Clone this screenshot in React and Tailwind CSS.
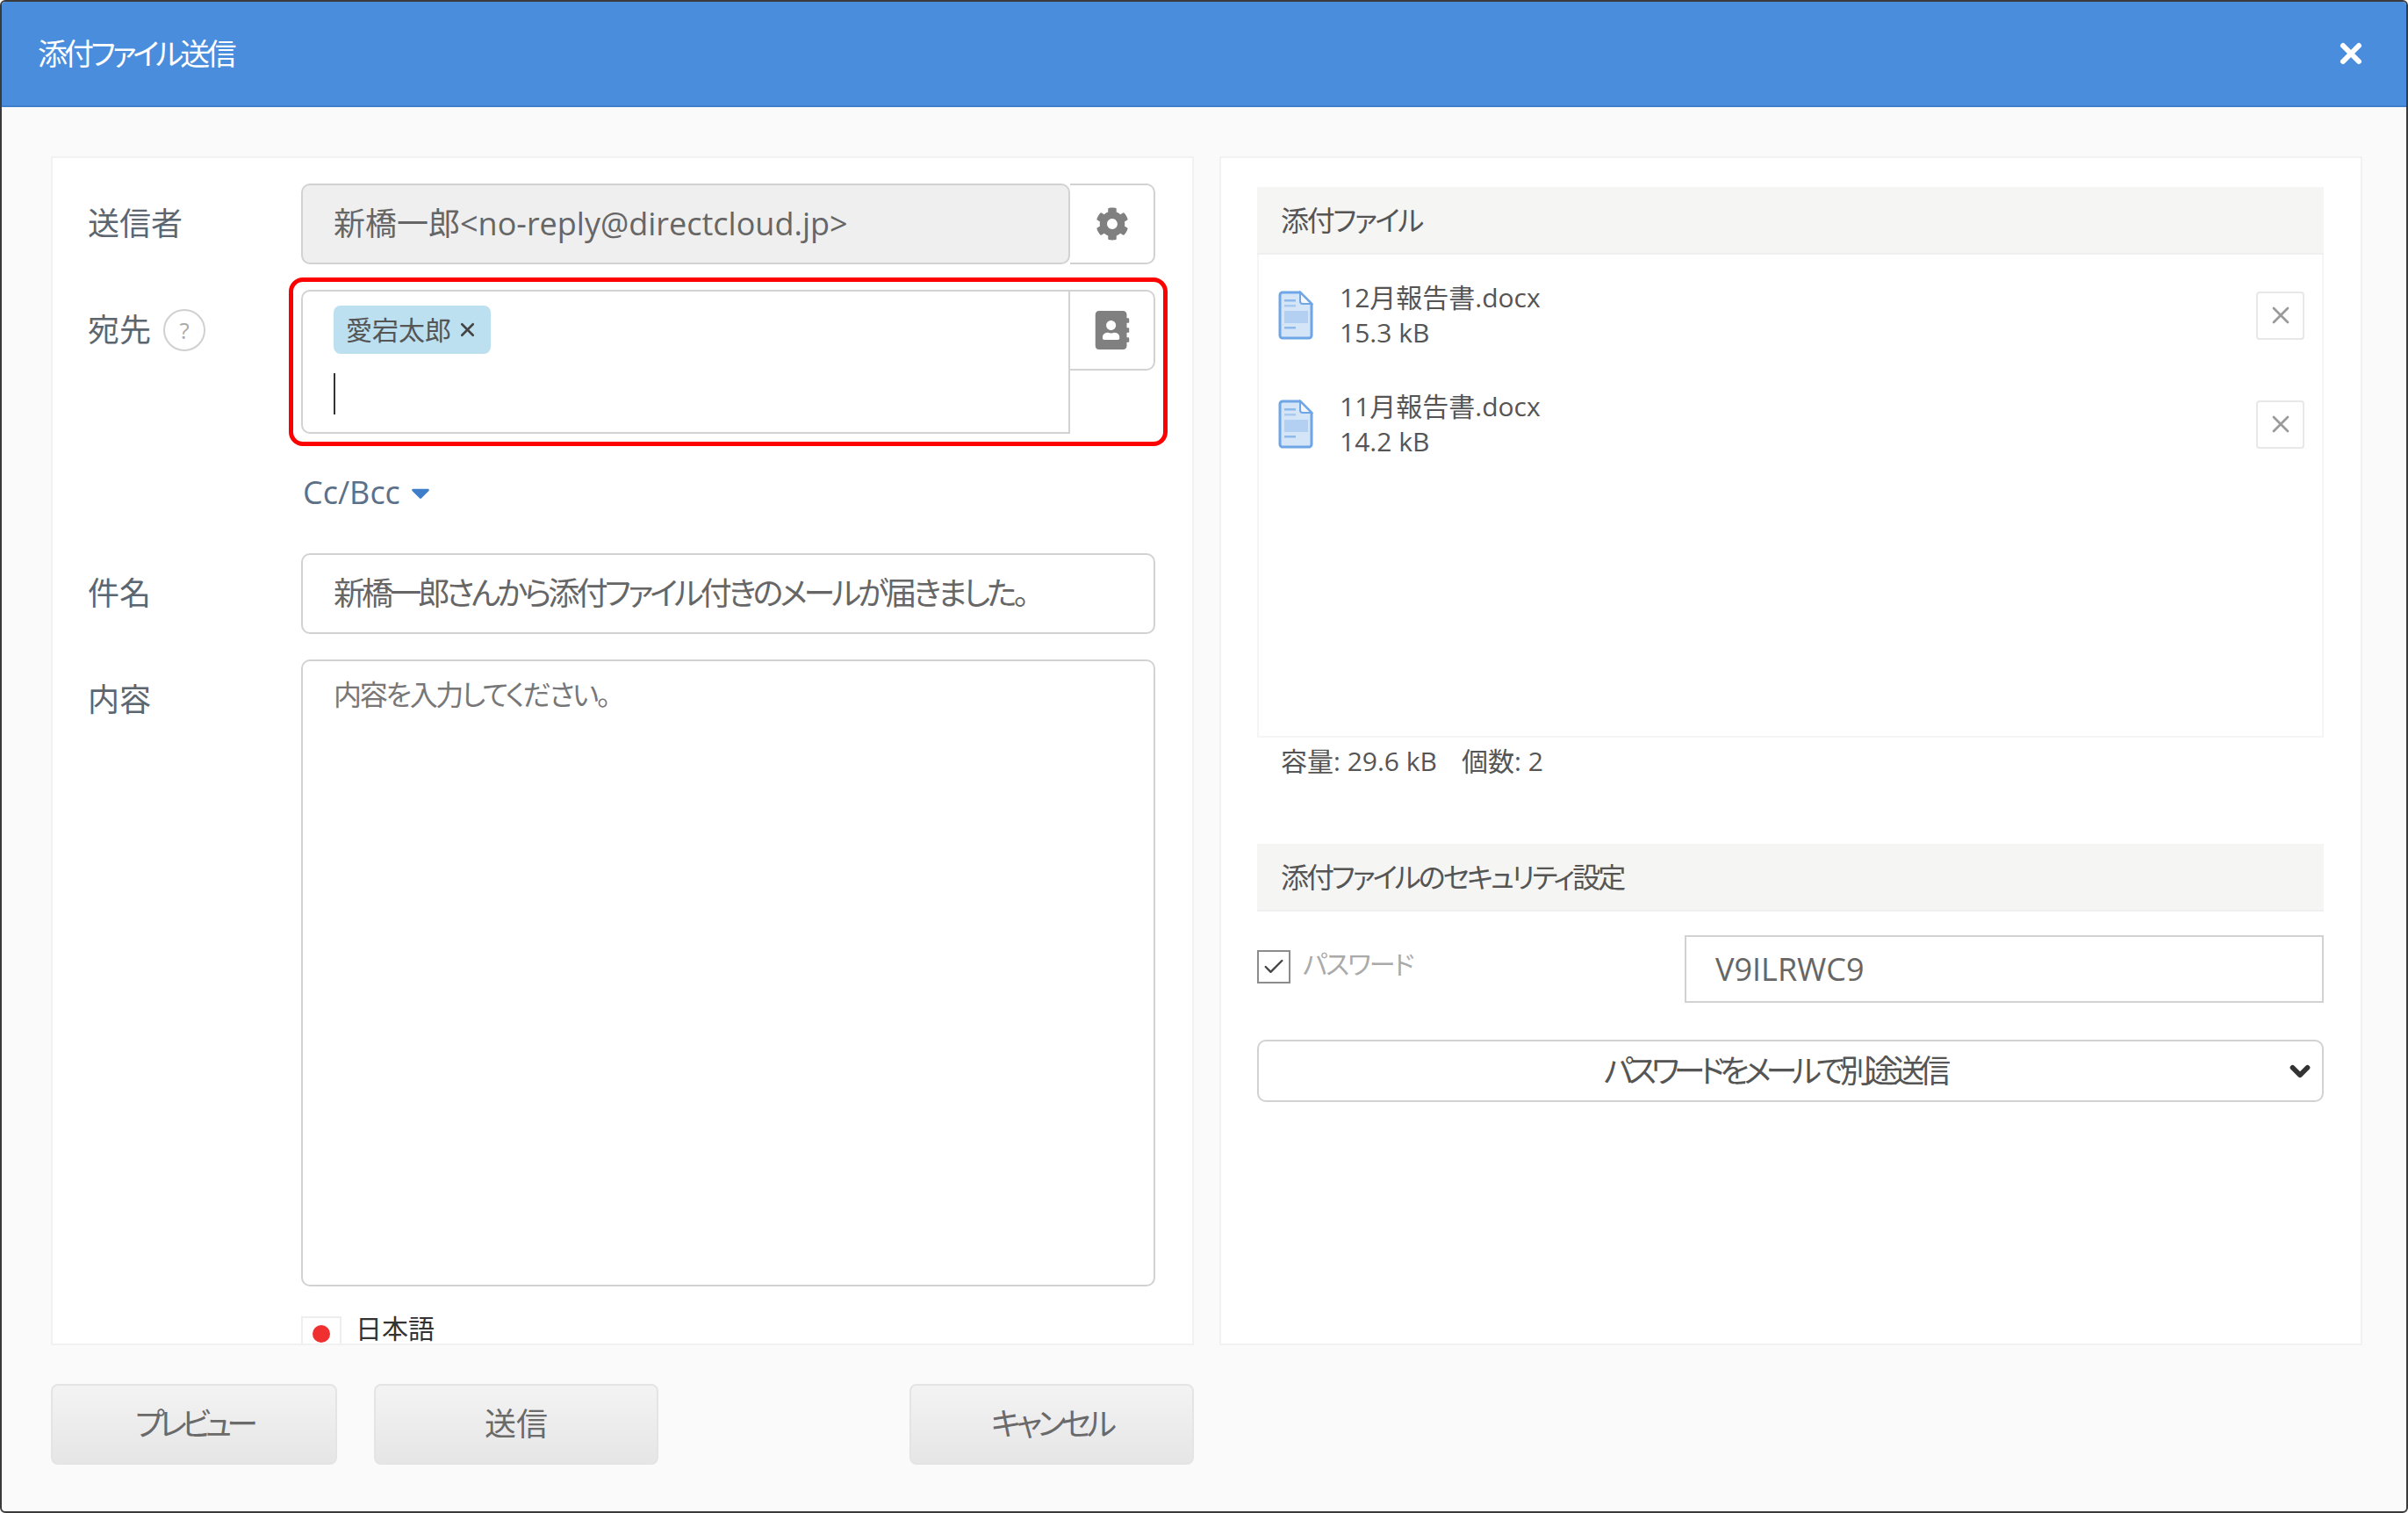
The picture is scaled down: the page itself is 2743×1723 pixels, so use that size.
// App.jsx
import { X, ChevronDown, Check } from 'lucide-react'
import { FaCog, FaAddressBook, FaCaretDown } from 'react-icons/fa'

const fieldBorder = 'border-2 border-[#d2d2d2]'

const files = [
  { name: '12月報告書.docx', size: '15.3 kB' },
  { name: '11月報告書.docx', size: '14.2 kB' },
]

function FileIcon() {
  return (
    <svg viewBox="0 0 40 56" className="w-[40px] h-[56px] shrink-0">
      <path d="M5 2h20l13 13v36a3 3 0 0 1-3 3H5a3 3 0 0 1-3-3V5a3 3 0 0 1 3-3z" fill="#d5e5f8" stroke="#6ea6e6" strokeWidth="3" />
      <path d="M25 2v10a3 3 0 0 0 3 3h10z" fill="#f4f8fd" stroke="#6ea6e6" strokeWidth="2" />
      <rect x="7" y="10" width="13" height="2.5" fill="#8db9ec" />
      <rect x="7" y="16" width="13" height="2.5" fill="#a9caf0" />
      <rect x="7" y="23" width="27" height="14" fill="#b3cff1" />
      <rect x="7" y="41" width="13" height="2.5" fill="#8db9ec" />
    </svg>
  )
}

function Field({ label, children }) {
  return (
    <div className="flex">
      <div className="w-[243px] shrink-0 text-[36px] leading-[92px] text-[#5c6670]">{label}</div>
      {children}
    </div>
  )
}

function SectionTitle({ className, children }) {
  return (
    <div className={`h-[77px] flex items-center px-[27px] bg-[#f5f5f3] border-b-2 border-[#efefef] text-[32px] text-[#555] ${className}`}>
      {children}
    </div>
  )
}

function FootButton({ className, children }) {
  return (
    <div className={`h-[92px] flex items-center justify-center rounded-[8px] border-2 border-[#e4e4e4] bg-gradient-to-b from-[#f3f3f3] to-[#e6e6e6] text-[36px] text-[#6a6a6a] ${className}`}>
      {children}
    </div>
  )
}

export default function App() {
  return (
    <div className="w-[2743px] h-[1723px] flex flex-col bg-[#fafafa] border-x-2 border-y-2 border-[#3a3a3a] rounded-[6px] overflow-hidden font-['Open_Sans','Noto_Sans_CJK_JP',sans-serif] [font-feature-settings:'palt']">
      {/* Title bar */}
      <div className="h-[120px] shrink-0 flex items-center justify-between pl-[41px] pr-[45px] bg-[#4a8ddc] border-b-2 border-[#3f7fca] text-white text-[34px]">
        <span className="tracking-[-3.9px]">添付ファイル送信</span>
        <X size={36} strokeWidth={4} />
      </div>

      <div className="flex-1 flex flex-col pl-[56px] pr-[50px] pt-[56px]">
        <div className="flex gap-[29px] h-[1354px]">
          {/* Mail form */}
          <div className="relative w-[1302px] border-2 border-[#f1f1f1] bg-white pt-[29px] pl-[40px] pr-[42px] overflow-hidden">
            <Field label="送信者">
              <div className={`flex-1 h-[92px] flex items-center pl-[35px] rounded-[10px] bg-[#efefef] text-[36px] text-[#666] ${fieldBorder}`}>
                新橋一郎&lt;no-reply@directcloud.jp&gt;
              </div>
              <div className={`w-[97px] h-[92px] flex items-center justify-center rounded-r-[10px] border-l-0 ${fieldBorder}`}>
                <FaCog size={38} className="text-[#808080]" />
              </div>
            </Field>

            <div className="mt-[29px]">
              <Field label={
                <span className="flex items-center gap-[14px] h-[92px]">
                  宛先
                  <span className="w-[48px] h-[48px] flex items-center justify-center rounded-full border-2 border-[#d0d0d0] text-[26px] text-[#aaa]">?</span>
                </span>
              }>
                <div className={`flex-1 h-[164px] pl-[35px] pt-[16px] rounded-l-[10px] ${fieldBorder}`}>
                  <span className="inline-flex items-center gap-[6px] h-[55px] px-[14px] rounded-[8px] bg-[#bce0ef] text-[30px] text-[#555]">
                    愛宕太郎
                    <X size={25} strokeWidth={2.5} className="text-[#444]" />
                  </span>
                  <div className="mt-[22px] w-[2px] h-[47px] bg-[#333]" />
                </div>
                <div className={`w-[97px] h-[92px] flex items-center justify-center rounded-r-[10px] border-l-0 ${fieldBorder}`}>
                  <FaAddressBook size={44} className="text-[#808080]" />
                </div>
              </Field>
            </div>

            <div className="ml-[245px] mt-[42px] h-[50px] flex items-center gap-[6px] text-[36px] text-[#5c7088]">
              Cc/Bcc
              <FaCaretDown size={34} className="text-[#3f7fca]" />
            </div>

            <div className="mt-[44px]">
              <Field label="件名">
                <div className={`flex-1 h-[92px] flex items-center pl-[35px] rounded-[10px] text-[36px] tracking-[-3.9px] text-[#666] ${fieldBorder}`}>
                  新橋一郎さんから添付ファイル付きのメールが届きました。
                </div>
              </Field>
            </div>

            <div className="mt-[29px]">
              <Field label="内容">
                <div className={`flex-1 h-[714px] pl-[35px] pt-[14px] rounded-[10px] text-[32px] tracking-[-2.3px] text-[#777] ${fieldBorder}`}>
                  内容を入力してください。
                </div>
              </Field>
            </div>

            <div className="ml-[243px] mt-[34px] flex items-start gap-[16px] text-[30px] leading-[30px] text-[#333]">
              <span className="w-[46px] h-[40px] flex items-center justify-center border-2 border-[#eeeeee]">
                <span className="w-[20px] h-[20px] rounded-full bg-[#f03030]" />
              </span>
              <span className="-mt-[1px]">日本語</span>
            </div>

            {/* Red annotation around the recipient field */}
            <div className="absolute left-[269px] top-[136px] w-[1001px] h-[192px] rounded-[16px] border-[5px] border-[#ff0000]" />
          </div>

          {/* Attachments */}
          <div className="w-[1302px] border-2 border-[#f1f1f1] bg-white pt-[33px] pl-[41px] pr-[42px]">
            <SectionTitle className="tracking-[-2.3px]">添付ファイル</SectionTitle>
            <div className="h-[550px] border-x-2 border-b-2 border-[#f5f5f5] pl-[22px] pr-[20px] pt-[41px] flex flex-col gap-[68px]">
              {files.map(f => (
                <div key={f.name} className="flex items-center h-[56px]">
                  <FileIcon />
                  <div className="flex-1 pl-[30px] text-[30px] leading-[40px] text-[#555]">
                    <div>{f.name}</div>
                    <div>{f.size}</div>
                  </div>
                  <div className="w-[55px] h-[55px] flex items-center justify-center rounded-[4px] border-2 border-[#e8e8e8]">
                    <X size={32} strokeWidth={2} className="text-[#9a9a9a]" />
                  </div>
                </div>
              ))}
            </div>
            <div className="mt-[6px] pl-[27px] h-[40px] flex gap-[28px] items-center text-[30px] text-[#555]">
              <span>容量: 29.6 kB</span>
              <span>個数: 2</span>
            </div>

            <div className="mt-[75px]">
              <SectionTitle className="tracking-[-3px]">添付ファイルのセキュリティ設定</SectionTitle>
            </div>

            <div className="mt-[27px] flex items-start">
              <div className="w-[487px] pt-[16px] flex items-center gap-[14px] text-[30px] text-[#aaa]">
                <span className="w-[38px] h-[38px] flex items-center justify-center border-2 border-[#8c8c8c]">
                  <Check size={28} strokeWidth={2} className="text-[#444]" />
                </span>
                <span className="tracking-[-2px] -mt-[6px]">パスワード</span>
              </div>
              <div className={`flex-1 h-[77px] flex items-center pl-[33px] text-[36px] text-[#666] ${fieldBorder}`}>
                V9ILRWC9
              </div>
            </div>

            <div className={`mt-[42px] h-[71px] relative flex items-center justify-center rounded-[10px] pr-[36px] text-[36px] tracking-[-6px] text-[#555] ${fieldBorder}`}>
              パスワードをメールで別途送信
              <ChevronDown size={34} strokeWidth={4} className="absolute right-[8px] text-[#333]" />
            </div>
          </div>
        </div>

        {/* Footer buttons */}
        <div className="mt-[44px] w-[1302px] flex">
          <FootButton className="w-[326px] tracking-[-6px]">プレビュー</FootButton>
          <FootButton className="w-[324px] ml-[42px]">送信</FootButton>
          <FootButton className="w-[324px] ml-auto tracking-[-5px]">キャンセル</FootButton>
        </div>
      </div>
    </div>
  )
}
